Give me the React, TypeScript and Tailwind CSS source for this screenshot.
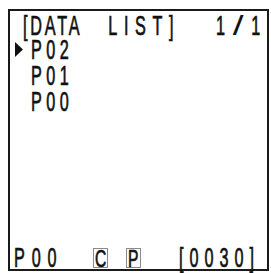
import React from "react";

const F = "font-['Liberation_Sans',Arial,sans-serif]";
const SC = "inline-block origin-left [transform:scaleX(0.6)] whitespace-nowrap [-webkit-text-stroke:0.7px_#111]";
const SB = "inline-block origin-left [transform:scaleX(0.65)] whitespace-nowrap [-webkit-text-stroke:0.7px_#111] text-[24px]";

export default function App() {
  return (
    <div className={`w-[271px] h-[273px] bg-white overflow-hidden text-[#111] ${F} text-[27px]`}>
      <div className="ml-[8px] mt-[9px] w-[261px] h-[262px] border-2 border-[#1a1a1a] flex flex-col pt-[2.7px]">
        {/* header */}
        <div className="flex h-[23px] leading-[24px] pl-[13px] shrink-0">
          <div className="w-[193px] shrink-0">
            <span className={SC}>
              <span className="tracking-[4.66px]">[DATA</span>
              <span className="inline-block w-[43.3px]"> </span>
              <span className="tracking-[11px]">LIST]</span>
            </span>
          </div>
          <div className="shrink-0">
            <span className={SC}>
              1
              <span className="inline-block ml-[18px] mr-[18px] [transform:scaleX(2.4)] origin-center [-webkit-text-stroke:0px_#111]">/</span>
              1
            </span>
          </div>
        </div>
        {/* rows */}
        <div className="flex h-[26px] leading-[26px] pl-[5px] shrink-0">
          <svg className="mt-[5px] shrink-0" width="8" height="15" viewBox="0 0 8 15">
            <polygon points="0,0 8,7.5 0,15" fill="#111" />
          </svg>
          <div className="ml-[7.75px]">
            <span className={`${SC} tracking-[7.4px]`}>P02</span>
          </div>
        </div>
        <div className="flex h-[26px] leading-[26px] pl-[20.75px] shrink-0">
          <span className={`${SC} tracking-[7.4px]`}>P01</span>
        </div>
        <div className="flex h-[26px] leading-[26px] pl-[20.75px] shrink-0">
          <span className={`${SC} tracking-[7.4px]`}>P00</span>
        </div>
        {/* footer */}
        <div className="mt-auto flex items-end h-[22px] leading-[22px] pl-[3.75px] shrink-0">
          <div className="w-[79.25px] shrink-0">
            <span className={`${SC} tracking-[11.5px]`}>P00</span>
          </div>
          <div className="w-[15px] h-[20px] mb-[1px] border border-[#8a8a8a] pl-[0.5px] leading-[18px] shrink-0">
            <span className={SB}>C</span>
          </div>
          <div className="ml-[18px] w-[15px] h-[20px] mb-[1px] border border-[#8a8a8a] pl-[0.5px] leading-[18px] shrink-0">
            <span className={SB}>P</span>
          </div>
          <div className="ml-[38px] shrink-0">
            <span className={`${SC} tracking-[10px]`}>[0030]</span>
          </div>
        </div>
      </div>
    </div>
  );
}
